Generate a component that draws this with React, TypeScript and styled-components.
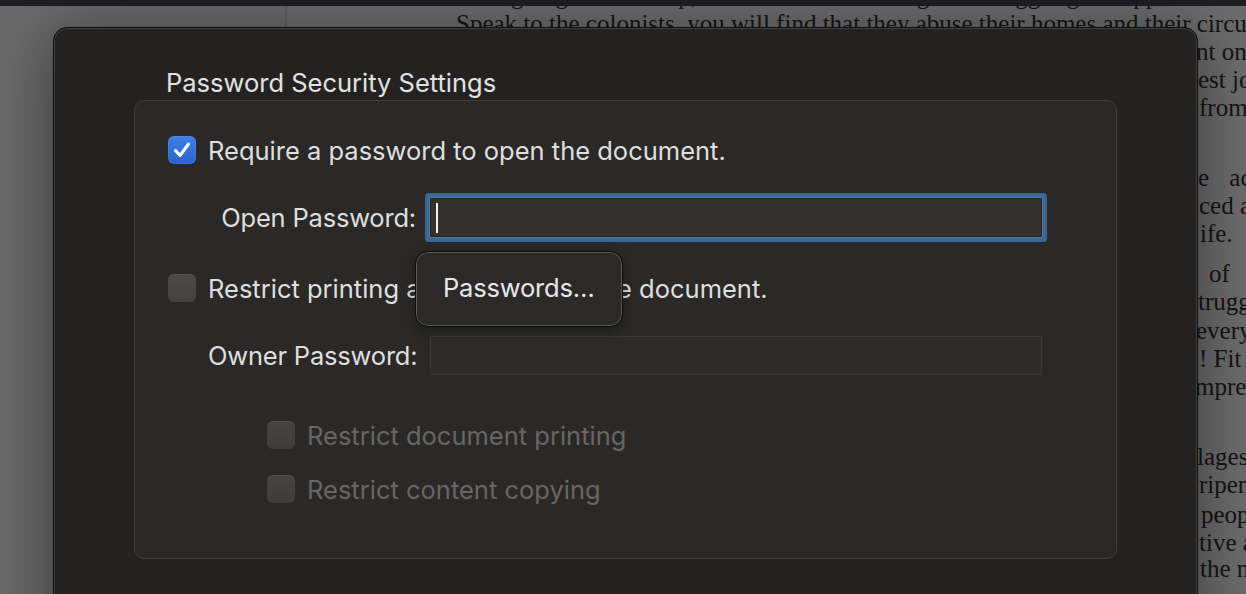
import React from "react";
import styled, { createGlobalStyle } from "styled-components";

const GlobalStyle = createGlobalStyle`
  html, body { margin: 0; padding: 0; background: #1d1e21; overflow: hidden; }
  #root { width: 1246px; height: 594px; }
`;

const Screen = styled.div`
  position: relative;
  width: 1246px;
  height: 594px;
  overflow: hidden;
  display: flex;
  flex-direction: column;
  background: #676767;
`;

const TopBar = styled.div`
  height: 6px;
  flex: none;
  background: #1d1e21;
`;

const Workspace = styled.div`
  flex: 1;
  display: flex;
  min-height: 0;
`;

const Sidebar = styled.div`
  width: 285px;
  flex: none;
  background: #696969;
  border-right: 2px solid #5e5e5e;
`;

const Page = styled.div`
  flex: 1;
  overflow: hidden;
  background: #6b6b6b;
  display: flex;
  flex-direction: column;
  font-family: "Liberation Serif", "Times New Roman", serif;
  font-size: 25px;
  line-height: 28px;
  color: #141414;
`;

const DocLine = styled.div<{ $x: number; $mt?: number; $ws?: number }>`
  white-space: pre;
  padding-left: ${(p) => p.$x}px;
  margin-top: ${(p) => p.$mt ?? 0}px;
  word-spacing: ${(p) => p.$ws ?? 0}px;
`;

const Dialog = styled.div`
  position: absolute;
  left: 53px;
  top: 27px;
  width: 1145px;
  height: 660px;
  box-sizing: border-box;
  background: #232221;
  border: 1px solid #0a0a0a;
  border-radius: 14px;
  box-shadow: inset 0 0 0 1px rgba(255, 255, 255, 0.15), 0 8px 60px rgba(0, 0, 0, 0.45);
  padding: 40px 80px 0;
  font-family: Inter, "Noto Sans", sans-serif;
  color: #dfdfdf;
`;

const Title = styled.div`
  font-size: 25.5px;
  line-height: 30px;
  padding-left: 32px;
  margin-bottom: 2px;
  color: #e2e2e2;
`;

const GroupBox = styled.div`
  height: 459px;
  box-sizing: border-box;
  background: #2a2928;
  border: 1px solid #3e3d3c;
  border-radius: 10px;
  padding: 35px 32px 0 33px;
  display: flex;
  flex-direction: column;
`;

const CheckRow = styled.div<{ $mt?: number; $indent?: number; $gap?: number }>`
  display: flex;
  align-items: center;
  height: 28px;
  gap: ${(p) => p.$gap ?? 12}px;
  margin-top: ${(p) => p.$mt ?? 0}px;
  margin-left: ${(p) => p.$indent ?? 0}px;
`;

const Box = styled.span<{ $checked?: boolean; $disabled?: boolean }>`
  width: 28px;
  height: 28px;
  flex: none;
  box-sizing: border-box;
  border-radius: 6px;
  display: flex;
  align-items: center;
  justify-content: center;
  background: ${(p) =>
    p.$checked
      ? "linear-gradient(#3d80e6, #2b63c9)"
      : p.$disabled
      ? "linear-gradient(#464544, #3e3d3c)"
      : "linear-gradient(#4b4a49, #434241)"};
  box-shadow: ${(p) =>
    p.$checked ? "inset 0 0 0 1px rgba(255,255,255,0.08)" : "inset 0 1px 0 rgba(255,255,255,0.06)"};
`;

const Label = styled.span<{ $disabled?: boolean }>`
  font-size: 25.5px;
  line-height: 30px;
  white-space: nowrap;
  padding-top: 1px;
  color: ${(p) => (p.$disabled ? "#676665" : "#dfdfdf")};
`;

const FieldRow = styled.div<{ $mt: number }>`
  display: flex;
  align-items: center;
  height: 39px;
  margin-top: ${(p) => p.$mt}px;
  margin-left: 40px;
  gap: 14px;
`;

const FieldLabel = styled.span`
  width: 208px;
  text-align: right;
  font-size: 25.5px;
  line-height: 30px;
  letter-spacing: -0.2px;
  white-space: nowrap;
  padding-top: 1px;
  color: #dfdfdf;
`;

const Field = styled.div<{ $focused?: boolean }>`
  position: relative;
  width: 612px;
  height: 39px;
  flex: none;
  box-sizing: border-box;
  display: flex;
  align-items: center;
  padding-left: 5px;
  background: ${(p) => (p.$focused ? "#333231" : "#2d2c2b")};
  border: 1px solid ${(p) => (p.$focused ? "#262524" : "#393837")};
  border-radius: 1px;
  box-shadow: ${(p) =>
    p.$focused ? "0 0 0 1px #55789e, 0 0 0 5px #3c6793" : "none"};
`;

const Caret = styled.span`
  width: 2px;
  height: 30px;
  background: #f2f2f2;
`;

const Popup = styled.div`
  position: absolute;
  z-index: 2;
  left: -16px;
  top: 52px;
  width: 208px;
  height: 76px;
  box-sizing: border-box;
  background: #2b2a29;
  border: 1px solid #0b0b0b;
  border-radius: 13px;
  box-shadow: inset 0 0 0 1px #5b5a59, 0 4px 14px rgba(0, 0, 0, 0.35);
  display: flex;
  align-items: center;
  padding: 0 0 4px 27px;
  font-size: 25.5px;
  letter-spacing: -0.2px;
  color: #e8e8e8;
  white-space: nowrap;
`;

const Check = () => (
  <svg width="22" height="22" viewBox="0 0 22 22" fill="none">
    <path d="M4.5 11.5 L9 16.5 L17.5 5" stroke="#fff" strokeWidth="3" strokeLinecap="round" strokeLinejoin="round" />
  </svg>
);

const docLines: { x: number; mt?: number; ws?: number; t: string }[] = [
  { x: 224, mt: -24, t: "going to the camp, wearied with suffering and struggling to support" },
  { x: 169, t: "Speak to the colonists, you will find that they abuse their homes and their circumstances" },
  { x: 909, t: "nt on" },
  { x: 911, t: "est jo" },
  { x: 912, t: "from" },
  { x: 911, mt: 42, ws: 14, t: "e ac" },
  { x: 912, t: "ced a" },
  { x: 913, t: "ife." },
  { x: 922, mt: 12, ws: 12, t: "of I" },
  { x: 911, t: "trugg" },
  { x: 909, mt: 1, t: "every" },
  { x: 912, t: "! Fit" },
  { x: 908, t: "mpres" },
  { x: 910, mt: 42, t: "lages" },
  { x: 912, t: "ripen" },
  { x: 914, mt: 2, t: "peop" },
  { x: 912, t: "tive a" },
  { x: 913, mt: -2, t: "the n" },
];

export default function App() {
  return (
    <>
      <GlobalStyle />
      <Screen>
        <TopBar />
        <Workspace>
          <Sidebar />
          <Page>
            {docLines.map((l, i) => (
              <DocLine key={i} $x={l.x} $mt={l.mt} $ws={l.ws}>
                {l.t}
              </DocLine>
            ))}
          </Page>
        </Workspace>
        <Dialog>
          <Title>Password Security Settings</Title>
          <GroupBox>
            <CheckRow>
              <Box $checked>
                <Check />
              </Box>
              <Label>Require a password to open the document.</Label>
            </CheckRow>
            <FieldRow $mt={34}>
              <FieldLabel>Open Password:</FieldLabel>
              <Field $focused>
                <Caret />
                <Popup>Passwords…</Popup>
              </Field>
            </FieldRow>
            <CheckRow $mt={37}>
              <Box />
              <Label>Restrict printing and copying of the document.</Label>
            </CheckRow>
            <FieldRow $mt={34}>
              <FieldLabel>Owner Password:</FieldLabel>
              <Field />
            </FieldRow>
            <CheckRow $mt={46} $indent={99} $gap={12}>
              <Box $disabled />
              <Label $disabled>Restrict document printing</Label>
            </CheckRow>
            <CheckRow $mt={26} $indent={99} $gap={12}>
              <Box $disabled />
              <Label $disabled>Restrict content copying</Label>
            </CheckRow>
          </GroupBox>
        </Dialog>
      </Screen>
    </>
  );
}
